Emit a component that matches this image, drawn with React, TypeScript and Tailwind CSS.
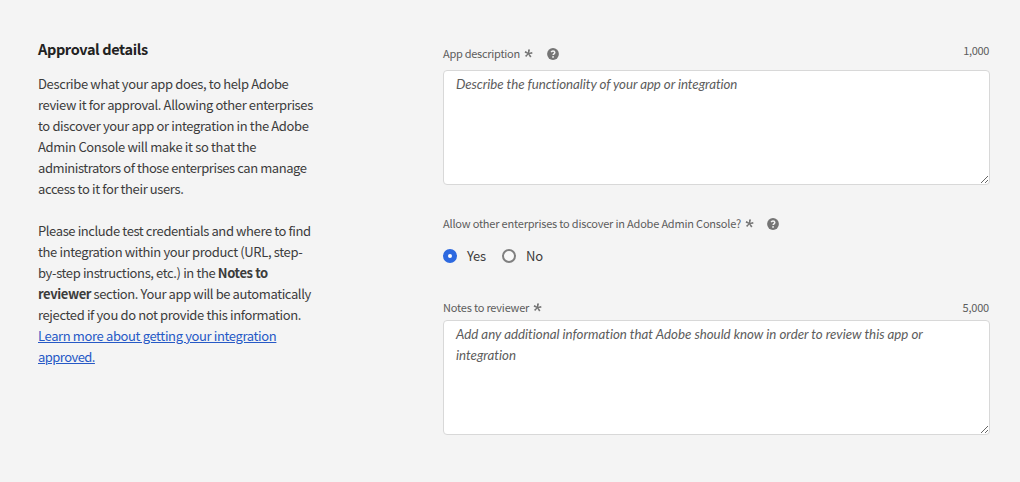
import React from "react";

function Asterisk({ className = "" }: { className?: string }) {
  return (
    <svg viewBox="0 0 8 8" className={`h-[9px] w-[9px] text-[#757575] ${className}`} fill="currentColor" aria-hidden="true">
      <path d="M6.575 6.555c.055.056.092.13 0 .204l-1.149.741c-.092.056-.129.019-.166-.074L3.834 4.94 1.963 7c-.019.036-.074.073-.129 0l-.889-.927c-.093-.055-.074-.111 0-.166l2.111-1.76L.648 3.24c-.037 0-.092-.074-.056-.167l.63-1.259a.097.097 0 0 1 .167-.036L3.5 3.148l.13-2.7a.1.1 0 0 1 .081-.111.15.15 0 0 1 .03 0l1.537.2c.093 0 .111.037.093.13l-.723 2.647 2.445-.741c.055-.037.111-.037.148.074l.241 1.37c.018.093 0 .13-.074.13l-2.556.2z" />
    </svg>
  );
}

function Help() {
  return (
    <svg viewBox="0 0 12 12" className="h-3 w-3" aria-hidden="true">
      <circle cx="6" cy="6" r="5.9" fill="#757575" />
      <path d="M4.2 4.1C4.6 3.2 5.2 3 6 3c1.1 0 1.8.6 1.8 1.5 0 1.3-1.7 1.3-1.7 2.6" fill="none" stroke="#f4f4f4" strokeWidth="1.5" />
      <circle cx="6.05" cy="8.9" r=".9" fill="#f4f4f4" />
    </svg>
  );
}

function Line({ className = "", children }: { className?: string; children: React.ReactNode }) {
  return <span className={`block ${className}`}>{children}</span>;
}

const area =
  "block h-[115px] w-full resize rounded-[4px] border border-[#d8d8d8] bg-white px-3 pt-[3px] text-[13.3px] leading-[21px] font-['Lato','Noto_Sans',sans-serif] text-[#4b4b4b] outline-none placeholder:italic placeholder:text-[#5c5c5c]";

export default function App() {
  return (
    <main className="flex h-[482px] w-[1020px] overflow-hidden bg-[#f4f4f4] font-['Noto_Sans_CJK_SC','Noto_Sans',sans-serif] text-[#3c3c3c]">
      <section className="w-[443px] shrink-0 pt-[37px] pl-[38px] text-[13px] leading-[21px] whitespace-nowrap">
        <h2 className="mb-[12px] text-[14.5px] leading-[24px] font-bold tracking-[-0.37px] text-[#222222]">Approval details</h2>
        <p>
          <Line className="tracking-[-0.365px]">Describe what your app does, to help Adobe</Line>
          <Line className="tracking-[-0.375px]">review it for approval. Allowing other enterprises</Line>
          <Line className="tracking-[-0.36px]">to discover your app or integration in the Adobe</Line>
          <Line className="tracking-[-0.34px]">Admin Console will make it so that the</Line>
          <Line className="tracking-[-0.425px]">administrators of those enterprises can manage</Line>
          <Line className="tracking-[-0.38px]">access to it for their users.</Line>
        </p>
        <p className="mt-[21px]">
          <Line className="tracking-[-0.4px]">Please include test credentials and where to find</Line>
          <Line className="tracking-[-0.36px]">the integration within your product (URL, step-</Line>
          <Line className="tracking-[-0.38px]">by-step instructions, etc.) in the <b>Notes to</b></Line>
          <Line className="tracking-[-0.4px]"><b>reviewer</b> section. Your app will be automatically</Line>
          <Line className="tracking-[-0.37px]">rejected if you do not provide this information.</Line>
          <a href="#" className="text-[#2659c6] underline">
            <Line className="tracking-[-0.37px]">Learn more about getting your integration</Line>
            <Line className="tracking-[-0.54px]">approved.</Line>
          </a>
        </p>
      </section>
      <section className="w-[547px] pt-[40px] text-[11px] leading-[20px] tracking-[-0.2px] text-[#5c5c5c]">
        <div className="flex h-[30px] justify-between">
          <label htmlFor="description" className="flex h-[26px] items-center tracking-[-0.27px]">
            App description
            <Asterisk className="ml-[4px]" />
            <span className="ml-[14px] pt-[1px]"><Help /></span>
          </label>
          <span className="mr-[1px] tracking-[-0.35px]">1,000</span>
        </div>
        <textarea id="description" className={`${area} tracking-[-0.065px]`} placeholder="Describe the functionality of your app or integration" />
        <div className="mt-[28px] flex h-5 items-center">
          Allow other enterprises to discover in Adobe Admin Console?
          <Asterisk className="ml-[4px]" />
          <span className="ml-[13px] pt-[1px]"><Help /></span>
        </div>
        <div className="mt-[13px] flex h-5 items-center text-[13px] text-[#3c3c3c]">
          <label className="flex items-center">
            <span className="h-[14px] w-[14px] rounded-full border-[5px] border-[#2d69e0] bg-white" />
            <span className="ml-[10px] w-[35px]">Yes</span>
          </label>
          <label className="flex items-center">
            <span className="h-[14px] w-[14px] rounded-full border-2 border-[#808080] bg-[#f8f8f8]" />
            <span className="ml-[10px]">No</span>
          </label>
        </div>
        <div className="mt-[31px] flex h-[23px] justify-between">
          <label htmlFor="notes" className="flex h-5 items-center">
            Notes to reviewer
            <Asterisk className="ml-[4px]" />
          </label>
          <span className="mr-[1px]">5,000</span>
        </div>
        <textarea id="notes" className={`${area} tracking-[-0.015px]`} placeholder="Add any additional information that Adobe should know in order to review this app or integration" />
      </section>
    </main>
  );
}
